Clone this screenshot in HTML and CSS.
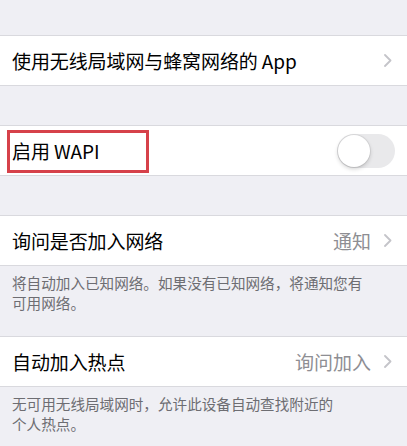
FILE: index.html
```html
<!DOCTYPE html>
<html lang="zh-CN">
<head>
  <meta charset="UTF-8">
  <title>无线局域网</title>
  <link rel="stylesheet" href="styles.css">
</head>
<body>
  <div class="settings">

    <div class="group first">
      <div class="row">
        <span class="label">使用无线局域网与蜂窝网络的 App</span>
        <span class="detail">
          <svg class="chevron" width="8" height="13" viewBox="0 0 8 13"><polyline points="1,1 6.5,6.5 1,12" /></svg>
        </span>
      </div>
    </div>

    <div class="group">
      <div class="row">
        <span class="label">启用 WAPI</span>
        <span class="switch"><span class="knob"></span></span>
        <div class="mark"></div>
      </div>
    </div>

    <div class="group">
      <div class="row">
        <span class="label">询问是否加入网络</span>
        <span class="detail">
          <span class="value">通知</span>
          <svg class="chevron" width="8" height="13" viewBox="0 0 8 13"><polyline points="1,1 6.5,6.5 1,12" /></svg>
        </span>
      </div>
    </div>
    <p class="footer">将自动加入已知网络。如果没有已知网络，将通知您有<br>可用网络。</p>

    <div class="group">
      <div class="row">
        <span class="label">自动加入热点</span>
        <span class="detail">
          <span class="value">询问加入</span>
          <svg class="chevron" width="8" height="13" viewBox="0 0 8 13"><polyline points="1,1 6.5,6.5 1,12" /></svg>
        </span>
      </div>
    </div>
    <p class="footer">无可用无线局域网时，允许此设备自动查找附近的<br>个人热点。</p>

  </div>
</body>
</html>
```

FILE: styles.css
```css
body {
  margin: 0;
  background: #efeff4;
  font-family: "Noto Sans CJK SC", "Noto Sans", sans-serif;
  color: #000;
}

.settings {
  display: flex;
  flex-direction: column;
}

.group {
  background: #fff;
  border-top: 1px solid #d9d9de;
  border-bottom: 1px solid #d9d9de;
  margin-top: 38px;
}

.group.first {
  margin-top: 35px;
}

.group + .group {
  margin-top: 39px;
}

.row {
  position: relative;
  height: 49px;
  display: flex;
  align-items: center;
  justify-content: space-between;
  padding: 0 12px 0 12px;
}

.label {
  font-size: 19px;
  letter-spacing: -0.1px;
  white-space: nowrap;
}

.detail {
  display: flex;
  align-items: center;
  gap: 13px;
  padding-right: 3px;
}

.value {
  font-size: 19px;
  color: #8e8e93;
}

.chevron polyline {
  fill: none;
  stroke: #c4c4c9;
  stroke-width: 1.8;
  stroke-linecap: round;
  stroke-linejoin: round;
}

/* off state switch */
.switch {
  position: relative;
  width: 58px;
  height: 34px;
  border-radius: 17px;
  background: #e9e9eb;
}

.switch .knob {
  position: absolute;
  top: 1px;
  left: 1px;
  width: 32px;
  height: 32px;
  border-radius: 50%;
  background: #fff;
  box-shadow: 0 0 0 1px rgba(0, 0, 0, 0.06), 0 2px 4px rgba(0, 0, 0, 0.18);
}

/* red highlight around the WAPI label */
.mark {
  position: absolute;
  left: 7px;
  top: 4px;
  width: 136px;
  height: 37px;
  border: 3px solid #d6414a;
}

.footer {
  margin: 0;
  padding: 7px 12px 24px;
  font-size: 14.6px;
  line-height: 19.5px;
  color: #6d6d72;
}

.footer + .group {
  margin-top: 0;
}
```
